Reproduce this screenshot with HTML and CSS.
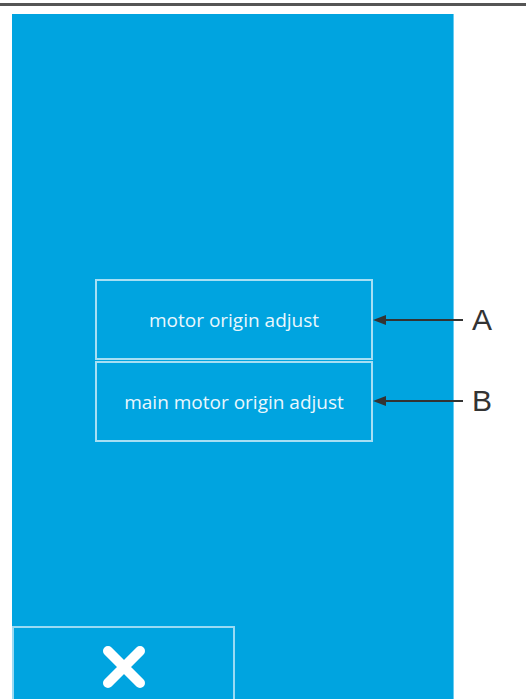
FILE: index.html
```html
<!DOCTYPE html>
<html lang="en">
<head>
    <meta charset="UTF-8">
    <meta name="viewport" content="width=device-width, initial-scale=1.0">
    <title>Origin Adjust Menu</title>
    <link rel="stylesheet" href="styles.css">
</head>
<body>

<div class="rule"></div>

<div class="stage">
    <div class="screen">
        <div class="menu">
            <button class="menu-item" type="button">motor origin adjust</button>
            <button class="menu-item" type="button">main motor origin adjust</button>
        </div>

        <!-- Close button -->
        <button class="close-button" type="button" aria-label="Close">
            <svg width="46" height="46" viewBox="0 0 46 46">
                <path d="M7 7 L39 39 M39 7 L7 39" stroke="#fff" stroke-width="10" stroke-linecap="round"/>
            </svg>
        </button>
    </div>

    <!-- Callouts -->
    <div class="callout callout-a">
        <svg class="arrow" width="90" height="12" viewBox="0 0 90 12">
            <line x1="10" y1="6" x2="90" y2="6" stroke="#333" stroke-width="2"/>
            <polygon points="0,6 13,1 13,11" fill="#333"/>
        </svg>
        <span class="callout-label">A</span>
    </div>
    <div class="callout callout-b">
        <svg class="arrow" width="90" height="12" viewBox="0 0 90 12">
            <line x1="10" y1="6" x2="90" y2="6" stroke="#333" stroke-width="2"/>
            <polygon points="0,6 13,1 13,11" fill="#333"/>
        </svg>
        <span class="callout-label">B</span>
    </div>
</div>

</body>
</html>
```

FILE: styles.css
```css
body {
    margin: 0;
    background-color: #ffffff;
    font-family: 'Open Sans', 'Liberation Sans', sans-serif;
    overflow: hidden;
}

.rule {
    height: 3px;
    margin-top: 3px;
    background-color: #555555;
}

.stage {
    position: relative;
    margin-top: 8px;
}

.screen {
    display: flex;
    flex-direction: column;
    width: 441px;
    height: 692px;
    margin-left: 12px;
    background-color: #00a4e0;
    border-right: 1px solid #66ccf2;
}

.menu {
    display: flex;
    flex-direction: column;
    gap: 1px;
    margin-top: 265px;
    margin-left: 83px;
    width: 278px;
}

.menu-item {
    height: 81px;
    border: 2px solid rgba(255, 255, 255, 0.65);
    background-color: transparent;
    color: #eaf7fd;
    font-family: 'Open Sans', 'Liberation Sans', sans-serif;
    font-size: 19px;
    cursor: pointer;
}

.close-button {
    display: flex;
    justify-content: center;
    align-items: center;
    margin-top: auto;
    width: 223px;
    height: 80px;
    padding: 0;
    border: 2px solid rgba(255, 255, 255, 0.6);
    border-bottom: none;
    background-color: transparent;
    cursor: pointer;
}

.callout {
    position: absolute;
    left: 373px;
    display: flex;
    align-items: center;
    gap: 9px;
}

.callout-a {
    top: 289px;
}

.callout-b {
    top: 370px;
}

.callout-label {
    font-family: 'Liberation Sans', sans-serif;
    font-size: 30px;
    color: #333333;
    line-height: 34px;
}
```
